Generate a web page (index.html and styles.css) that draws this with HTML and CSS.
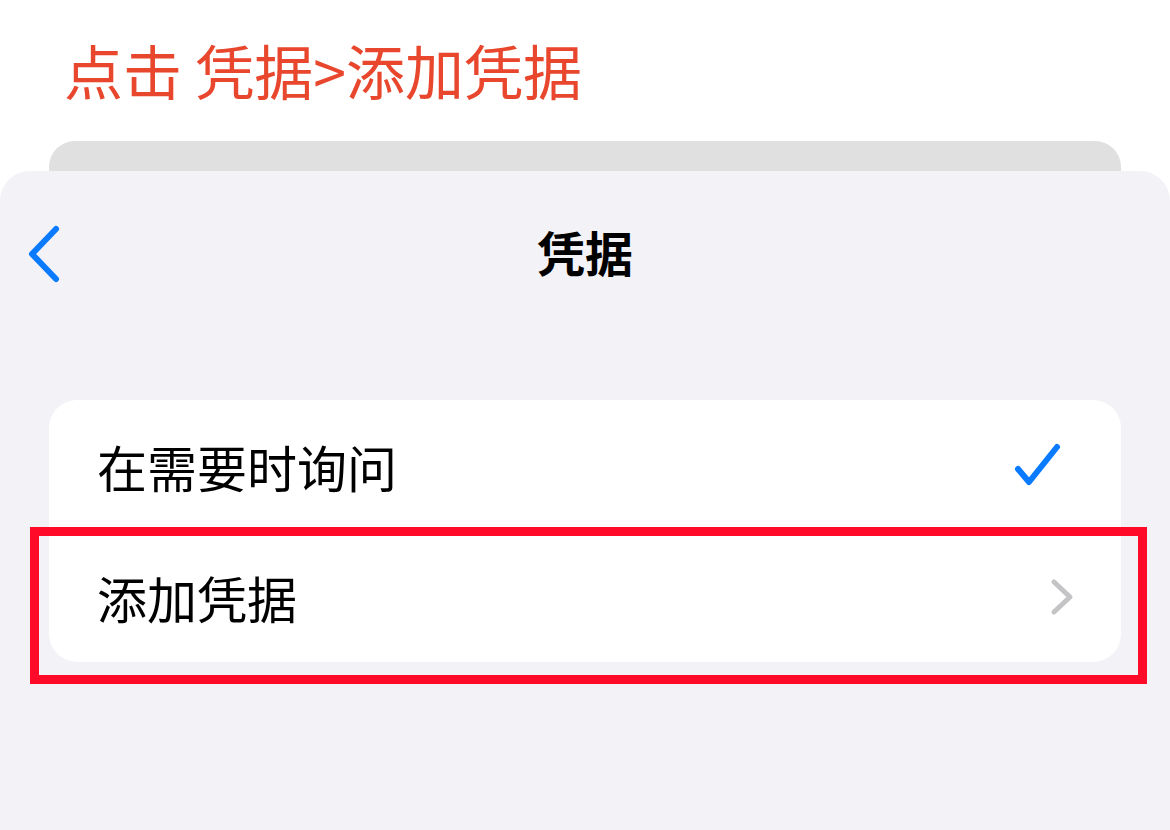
FILE: index.html
```html
<!DOCTYPE html>
<html lang="zh-CN">
  <head>
    <meta charset="UTF-8" />
    <meta name="viewport" content="width=device-width, initial-scale=1.0" />
    <title>凭据</title>
    <link rel="stylesheet" href="styles.css">
  </head>

  <body>
    <h1 class="hint">点击 凭据&gt;添加凭据</h1>

    <div class="peek"></div>
    <div class="sheet">
      <div class="nav">
        <button class="back" aria-label="返回">
          <svg width="36" height="58" viewBox="0 0 36 58">
            <path d="M31 4 L7 29 L31 54" fill="none" stroke="#0a7aff" stroke-width="6" stroke-linecap="round" stroke-linejoin="round" />
          </svg>
        </button>
        <h2 class="nav-title">凭据</h2>
      </div>

      <div class="list">
        <div class="row">
          <span class="label">在需要时询问</span>
          <svg class="check" width="48" height="48" viewBox="0 0 48 48">
            <path d="M4 27 L15 40 L43 5" fill="none" stroke="#0a7aff" stroke-width="6" stroke-linecap="round" stroke-linejoin="round" />
          </svg>
        </div>
        <div class="row">
          <span class="label">添加凭据</span>
          <svg class="chevron" width="24" height="38" viewBox="0 0 24 38">
            <path d="M4 4 L20 19 L4 34" fill="none" stroke="#c4c4c7" stroke-width="5" stroke-linecap="round" stroke-linejoin="round" />
          </svg>
        </div>
        <div class="highlight"></div>
      </div>
    </div>
  </body>
</html>
```

FILE: styles.css
```css
body {
  font-family: "Noto Sans CJK SC", "Noto Sans", sans-serif;
  margin: 0;
  padding: 0;
  background-color: #fff;
  height: 830px;
  overflow: hidden;
}

.hint {
  margin: 0;
  padding: 40px 0 0 64px;
  height: 141px;
  box-sizing: border-box;
  font-size: 59px;
  font-weight: normal;
  line-height: 1;
  color: #e8472e;
}

.peek {
  margin: 0 49px 0 49px;
  height: 30px;
  background-color: #e0e0e1;
  border-radius: 26px 26px 0 0;
}

.sheet {
  background-color: #f2f2f7;
  border-radius: 30px 30px 0 0;
  height: 659px;
  padding: 0 49px;
}

.nav {
  position: relative;
  height: 229px;
  display: flex;
  justify-content: center;
  padding-top: 52px;
  box-sizing: border-box;
}

.back {
  position: absolute;
  left: -24px;
  top: 54px;
  padding: 0;
  border: none;
  background: none;
}

.nav-title {
  margin: 0;
  font-size: 48px;
  font-weight: bold;
  line-height: 56px;
  color: #000;
}

.list {
  position: relative;
  background-color: #fff;
  border-radius: 28px;
}

.row {
  display: flex;
  justify-content: space-between;
  align-items: center;
  height: 131px;
  padding: 0 48px;
}

.label {
  font-size: 50px;
  color: #000;
  line-height: 1;
}

.check {
  margin-right: 11px;
}

.chevron {
  margin-right: -1px;
}

.highlight {
  position: absolute;
  left: -19px;
  top: 127px;
  width: 1117px;
  height: 157px;
  box-sizing: border-box;
  border: 9px solid #ff0a28;
}
```
